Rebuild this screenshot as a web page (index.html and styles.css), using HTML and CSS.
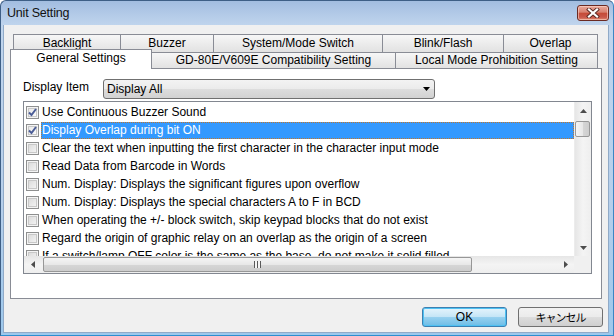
FILE: index.html
```html
<!DOCTYPE html>
<html>
<head>
<meta charset="utf-8">
<link rel="stylesheet" href="styles.css">
</head>
<body>
<div class="window">
  <div class="titlebar">
    <span class="title">Unit Setting</span>
    <div class="close">
      <svg width="14" height="10" viewBox="0 0 14 10">
        <path d="M3 1.5 L11 8.5 M11 1.5 L3 8.5" stroke="#5a2a24" stroke-width="4" stroke-linecap="square"/>
        <path d="M3 1.5 L11 8.5 M11 1.5 L3 8.5" stroke="#ffffff" stroke-width="2.2" stroke-linecap="square"/>
      </svg>
    </div>
  </div>
  <div class="client">
    <div class="tabs">
      <div class="tabrow back">
        <div class="tab t-backlight">Backlight</div>
        <div class="tab t-buzzer">Buzzer</div>
        <div class="tab t-system">System/Mode Switch</div>
        <div class="tab t-blink">Blink/Flash</div>
        <div class="tab t-overlap">Overlap</div>
      </div>
      <div class="tabrow front">
        <div class="tab selected t-general">General Settings</div>
        <div class="tab t-gd">GD-80E/V609E Compatibility Setting</div>
        <div class="tab t-local">Local Mode Prohibition Setting</div>
      </div>
    </div>
    <div class="panel">
      <div class="field">
        <span class="label">Display Item</span>
        <div class="select">
          <span>Display All</span>
          <svg class="drop" width="7" height="4" viewBox="0 0 7 4"><path d="M0 0 H7 L3.5 4 Z" fill="#000"/></svg>
        </div>
      </div>
      <div class="listbox">
        <div class="listmain">
          <div class="items">
            <div class="row"><span class="cb checked"><svg width="11" height="11" viewBox="0 0 11 11"><path d="M2 5.5 L4.5 8 L9 2" fill="none" stroke="#4a5c96" stroke-width="2"/></svg></span><span class="text">Use Continuous Buzzer Sound</span></div>
            <div class="row sel"><span class="cb checked"><svg width="11" height="11" viewBox="0 0 11 11"><path d="M2 5.5 L4.5 8 L9 2" fill="none" stroke="#4a5c96" stroke-width="2"/></svg></span><span class="text">Display Overlap during bit ON</span></div>
            <div class="row"><span class="cb"></span><span class="text">Clear the text when inputting the first character in the character input mode</span></div>
            <div class="row"><span class="cb"></span><span class="text">Read Data from Barcode in Words</span></div>
            <div class="row"><span class="cb"></span><span class="text">Num. Display: Displays the significant figures upon overflow</span></div>
            <div class="row"><span class="cb"></span><span class="text">Num. Display: Displays the special characters A to F in BCD</span></div>
            <div class="row"><span class="cb"></span><span class="text">When operating the +/- block switch, skip keypad blocks that do not exist</span></div>
            <div class="row"><span class="cb"></span><span class="text">Regard the origin of graphic relay on an overlap as the origin of a screen</span></div>
            <div class="row"><span class="cb"></span><span class="text">If a switch/lamp OFF color is the same as the base, do not make it solid filled</span></div>
          </div>
          <div class="vscroll">
            <div class="arrow-v"><svg width="7" height="4" viewBox="0 0 7 4"><path d="M3.5 0 L7 4 H0 Z" fill="#4d4d4d"/></svg></div>
            <div class="vtrack"><div class="vthumb"></div></div>
            <div class="arrow-v"><svg width="7" height="4" viewBox="0 0 7 4"><path d="M0 0 H7 L3.5 4 Z" fill="#4d4d4d"/></svg></div>
          </div>
        </div>
        <div class="hrow">
          <div class="hscroll">
            <div class="arrow-h"><svg width="4" height="7" viewBox="0 0 4 7"><path d="M4 0 V7 L0 3.5 Z" fill="#4d4d4d"/></svg></div>
            <div class="htrack"><div class="hthumb"><span class="grip"></span></div></div>
            <div class="arrow-h"><svg width="4" height="7" viewBox="0 0 4 7"><path d="M0 0 V7 L4 3.5 Z" fill="#4d4d4d"/></svg></div>
          </div>
          <div class="corner"></div>
        </div>
      </div>
    </div>
    <div class="buttons">
      <div class="btn default">OK</div>
      <div class="btn jp">キャンセル</div>
    </div>
  </div>
</div>
</body>
</html>
```

FILE: styles.css
```css
* { box-sizing: border-box; }
html, body { margin: 0; padding: 0; }
body {
  width: 614px;
  height: 336px;
  overflow: hidden;
  font-family: "Liberation Sans", Arial, sans-serif;
  font-size: 12px;
  color: #000;
  background: #fff;
}
.window {
  width: 614px;
  height: 336px;
  border: 1px solid #3e5f86;
  border-bottom-color: #2a8fd0;
  border-right-color: #3a86c4;
  border-radius: 6px 6px 0 0;
  background: linear-gradient(#a2bde0 0px, #b4cbe8 14px, #c0d5ed 25px, #b6cfeb 60%, #9dc8ec 100%);
  display: flex;
  flex-direction: column;
}
.titlebar {
  height: 24px;
  display: flex;
  align-items: flex-start;
  justify-content: space-between;
  flex: none;
}
.title {
  font-family: "Liberation Sans", Arial, sans-serif;
  font-size: 12.5px;
  color: #111;
  margin: 5px 0 0 6px;
  letter-spacing: -0.2px;
}
.close {
  width: 32px;
  height: 16px;
  margin: 4px 4px 0 0;
  border: 1px solid #6b2a22;
  border-radius: 3px;
  background: linear-gradient(#e9a99b 0%, #d7806f 45%, #c54a36 50%, #c9584a 80%, #e08a70 100%);
  box-shadow: inset 0 0 0 1px rgba(255,220,210,0.55);
  display: flex;
  align-items: center;
  justify-content: center;
}
.client {
  flex: 1;
  margin: 0 4px 2px 2px;
  background: #f0f0f0;
  border: 1px solid #90aac8;
  border-top: none;
  padding: 9px 6px 0 6px;
  display: flex;
  flex-direction: column;
}
.tabs {
  display: flex;
  flex-direction: column;
}
.tabrow {
  display: flex;
}
.tabrow.back {
  height: 18px;
  padding-left: 3px;
}
.tabrow.front {
  height: 16px;
  align-items: flex-end;
}
.tab {
  height: 18px;
  border: 1px solid #898c95;
  border-bottom: none;
  background: linear-gradient(#f7f7f7, #ececec 50%, #e2e2e2);
  display: flex;
  align-items: flex-start;
  justify-content: center;
  padding-top: 1px;
  white-space: nowrap;
  margin-left: -1px;
}
.tabrow .tab:first-child { margin-left: 0; }
.front .tab { height: 16px; padding-top: 0; }
.front .tab.selected {
  height: 20px;
  margin-bottom: -1px;
  background: #fff;
  position: relative;
  z-index: 1;
  padding-top: 1px;
}
.t-backlight { width: 108px; }
.t-buzzer { width: 94px; }
.t-system { width: 170px; }
.t-blink { width: 122px; }
.t-overlap { width: 95px; }
.t-general { width: 142px; }
.t-gd { width: 245px; }
.t-local { width: 203px; }

.panel {
  width: 592px;
  height: 231px;
  border: 1px solid #898c95;
  background: #fff;
  padding: 10px 0 0 12px;
  display: flex;
  flex-direction: column;
  flex: none;
}
.field {
  display: flex;
  height: 20px;
  align-items: flex-start;
}
.label {
  width: 80px;
  padding-top: 1px;
}
.select {
  width: 332px;
  height: 20px;
  border: 1px solid #707070;
  border-radius: 3px;
  background: linear-gradient(#f3f3f3, #ebebeb 50%, #dddddd 51%, #d2d2d2);
  display: flex;
  align-items: center;
  justify-content: space-between;
  padding: 0 4px 0 3px;
}
.drop { margin-bottom: 1px; }
.listbox {
  margin-top: 2px;
  width: 569px;
  height: 173px;
  border: 1px solid #828790;
  display: flex;
  flex-direction: column;
}
.listmain {
  display: flex;
  height: 154px;
}
.items {
  width: 550px;
  height: 154px;
  overflow: hidden;
  padding-top: 1px;
}
.row {
  height: 18px;
  display: flex;
  align-items: center;
  padding-left: 2px;
  white-space: nowrap;
}
.cb {
  width: 13px;
  height: 13px;
  flex: none;
  border: 1px solid #8e8f8f;
  background: #f4f4f4;
  box-shadow: inset 0 0 0 1px #f4f4f4, inset 0 0 0 2px #c8c8c8;
  background-image: linear-gradient(135deg, #d6d6d6, #f8f8f8);
  display: flex;
  align-items: center;
  justify-content: center;
  margin-right: 2px;
}
.cb.checked {
  background-image: linear-gradient(135deg, #e4e4e4, #ffffff);
}
.text {
  flex: 1;
  height: 17px;
  line-height: 17px;
  padding-left: 1px;
}
.row.sel .text {
  background: #3399ff;
  color: #fff;
  outline: 1px dotted #c0772d;
  outline-offset: -1px;
}
.vscroll {
  width: 17px;
  height: 154px;
  display: flex;
  flex-direction: column;
  background: linear-gradient(to right, #e6e6e6, #f4f4f4 50%, #eeeeee);
  border-left: 1px solid #ececec;
}
.arrow-v {
  height: 17px;
  display: flex;
  align-items: center;
  justify-content: center;
  flex: none;
}
.vtrack {
  flex: 1;
  padding-top: 2px;
}
.vthumb {
  width: 15px;
  height: 16px;
  margin-left: 0;
  border: 1px solid #979797;
  border-radius: 2px;
  background: linear-gradient(to right, #f5f5f5, #e8e8e8 50%, #d6d6d6 51%, #cdcdcd);
}
.hrow {
  display: flex;
  height: 17px;
}
.hscroll {
  width: 550px;
  display: flex;
  background: linear-gradient(#e6e6e6, #f4f4f4 50%, #eeeeee);
}
.arrow-h {
  width: 17px;
  display: flex;
  align-items: center;
  justify-content: center;
  flex: none;
}
.htrack {
  flex: 1;
  padding: 1px 0 0 2px;
}
.hthumb {
  width: 429px;
  height: 15px;
  border: 1px solid #979797;
  border-radius: 2px;
  background: linear-gradient(#f5f5f5, #e8e8e8 50%, #d6d6d6 51%, #cdcdcd);
  display: flex;
  align-items: center;
  justify-content: center;
}
.grip {
  width: 7px;
  height: 7px;
  background: repeating-linear-gradient(to right, #5a5a5a 0 1px, #f5f5f5 1px 3px);
}
.corner {
  width: 17px;
  background: #f0f0f0;
}
.buttons {
  display: flex;
  justify-content: flex-end;
  gap: 11px;
  margin: 8px -1px 0 0;
}
.btn {
  width: 85px;
  height: 20px;
  border: 1px solid #707070;
  border-radius: 3px;
  background: linear-gradient(#f2f2f2, #ebebeb 50%, #dddddd 51%, #cfcfcf);
  display: flex;
  align-items: center;
  justify-content: center;
}
.btn.default {
  border-color: #3c7fb1;
  background: linear-gradient(#e5f4fc, #c4e5f6 50%, #98d1ef 51%, #6dbce6);
  box-shadow: inset 0 0 0 1px #4ec1f2;
}
.btn.jp {
  font-family: "Noto Sans CJK JP", sans-serif;
  font-size: 11px;
  letter-spacing: -1px;
}
```
